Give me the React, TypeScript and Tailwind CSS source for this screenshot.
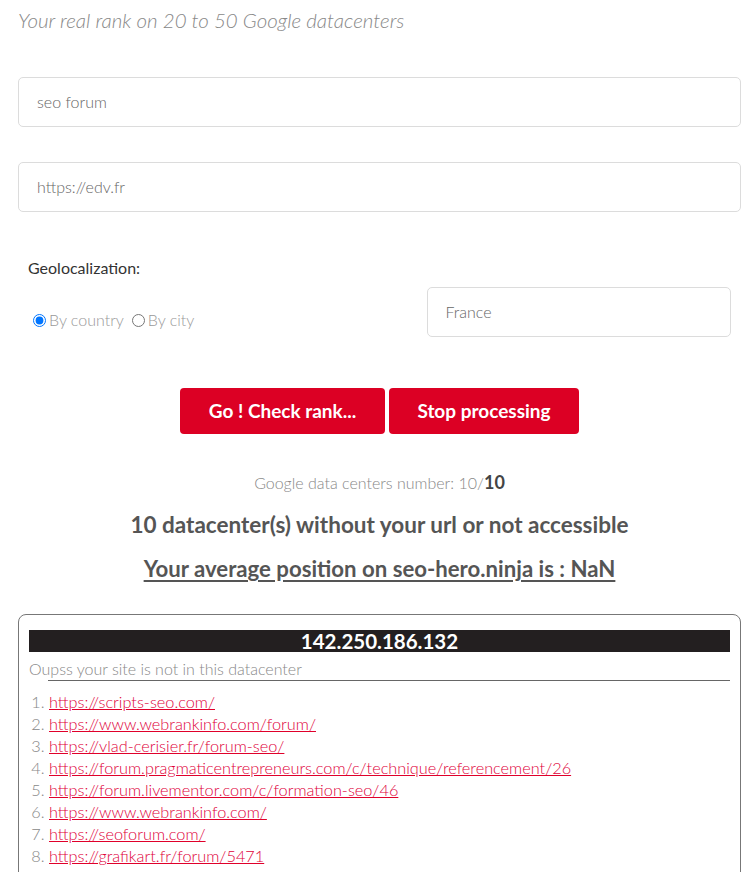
import React from 'react';

const links = [
  'https://scripts-seo.com/',
  'https://www.webrankinfo.com/forum/',
  'https://vlad-cerisier.fr/forum-seo/',
  'https://forum.pragmaticentrepreneurs.com/c/technique/referencement/26',
  'https://forum.livementor.com/c/formation-seo/46',
  'https://www.webrankinfo.com/',
  'https://seoforum.com/',
  'https://grafikart.fr/forum/5471',
];

const Field: React.FC<{ value: string; className?: string }> = ({ value, className }) => (
  <div
    className={`h-[50px] border border-[#dcdcdc] rounded-[5px] flex items-center px-[18px] text-[16px] font-light text-[#666] ${className ?? ''}`}
  >
    {value}
  </div>
);

const App: React.FC = () => {
  return (
    <div className="w-[755px] h-[872px] overflow-hidden bg-white font-['Lato',sans-serif] text-[#555]">
      <div className="pl-[18px] pr-[14px]">
        <p className="pt-[5px] leading-[30px] text-[20.5px] italic font-light text-[#888]">
          Your real rank on 20 to 50 Google datacenters
        </p>

        <Field value="seo forum" className="mt-[42px]" />
        <Field value="https://edv.fr" className="mt-[35px]" />

        <p className="mt-[46px] pl-[10px] text-[16px] text-[#333] leading-[20px]">Geolocalization:</p>
        <div className="flex mt-[9px]">
          <div className="w-1/2 pl-[15px] pt-[23px]">
            <div className="flex items-center h-[20px] text-[16px] font-light text-[#999]">
              <label className="flex items-center">
                <input type="radio" name="geo" defaultChecked className="m-0 mr-[3px] w-[13px] h-[13px]" />
                By country
              </label>
              <label className="flex items-center ml-[8px]">
                <input type="radio" name="geo" className="m-0 mr-[3px] w-[13px] h-[13px]" />
                By city
              </label>
            </div>
          </div>
          <div className="w-1/2 pl-[47px] pr-[10px]">
            <Field value="France" />
          </div>
        </div>

        <div className="flex justify-center gap-[4px] mt-[51px]">
          <button className="w-[205px] h-[46px] rounded-[4px] bg-[#dc0024] text-white font-bold text-[19px]">
            Go ! Check rank...
          </button>
          <button className="w-[190px] h-[46px] rounded-[4px] bg-[#dc0024] text-white font-bold text-[19px]">
            Stop processing
          </button>
        </div>

        <p className="text-center mt-[36px] text-[16px] font-light text-[#888] leading-[24px]">
          Google data centers number: 10/<span className="font-bold text-[18px] text-[#444]">10</span>
        </p>
        <p className="text-center mt-[16px] text-[22.5px] font-bold text-[#555] leading-[28px]">
          10 datacenter(s) without your url or not accessible
        </p>
        <p className="text-center mt-[16px] text-[22.2px] font-bold text-[#555] leading-[28px] underline underline-offset-[3px]">
          Your average position on seo-hero.ninja is : NaN
        </p>

        <div className="mt-[31px] border border-[#777] rounded-[8px] pt-[15px] px-[10px] pb-[30px]">
          <div className="bg-[#231f20] text-white text-center font-bold text-[20.5px] leading-[22px]">
            142.250.186.132
          </div>
          <p className="text-[16px] font-light text-[#888] leading-[20px] pt-[7px]">
            Oupss your site is not in this datacenter
          </p>
          <div className="ml-[19px] mt-[1px] border-t border-[#666]"></div>
          <ol className="list-decimal pl-[20px] pt-[10px] text-[16.3px] font-light text-[#888] leading-[22px]">
            {links.map((l) => (
              <li key={l}>
                <a href="#" className="text-[#e0003a] underline decoration-[#e0002a]">
                  {l}
                </a>
              </li>
            ))}
          </ol>
        </div>
      </div>
    </div>
  );
};

export default App;
